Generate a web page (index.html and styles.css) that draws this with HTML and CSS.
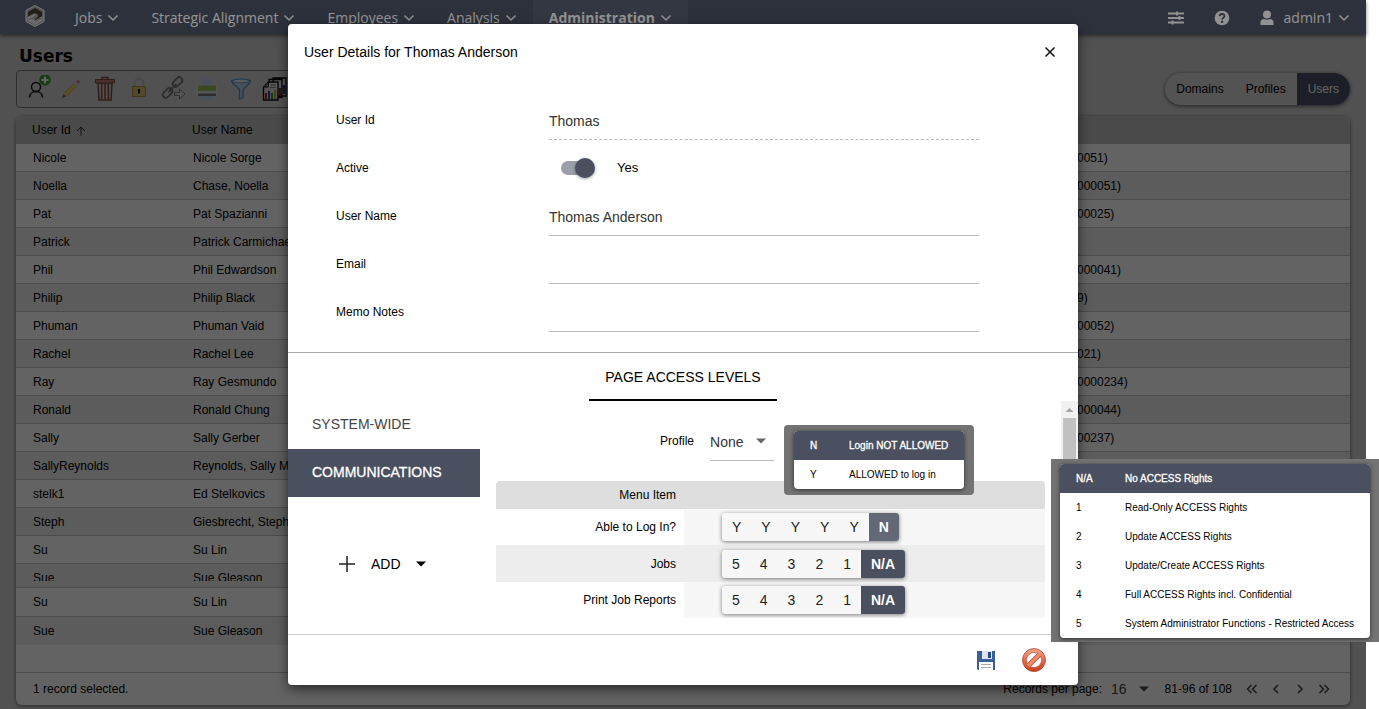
FILE: index.html
```html
<!DOCTYPE html>
<html lang="en">
<head>
<meta charset="utf-8">
<title>Users</title>
<link rel="stylesheet" href="styles.css">
</head>
<body>
<svg class="sprite" aria-hidden="true">
  <symbol id="chev" viewBox="0 0 12 12"><path d="M1.500 3.500 6 8l4.500-4.500" fill="none" stroke="currentColor" stroke-width="1.500"/></symbol>
  <symbol id="caret" viewBox="0 0 10 10"><path d="M0 2.500h10L5 7.500z" fill="currentColor"/></symbol>
</svg>
<div class="app">
  <header class="nav">
    <svg class="logo" viewBox="0 0 20 22">
      <path d="M10 0.500 19 5.500v11L10 21.500 1 16.500v-11z" fill="#8a8a8a" stroke="#d0d0d0"/>
      <path d="M3 7 10 3l7 4v6l-6 3.500-3-1 5-3.500V9.500L10 8l-7 3.500z" fill="#38342c"/>
      <path d="M2.500 12.500 8.500 9l3 1-4 2.500 3 2.500 7-4v4.500L10 20l-7.500-4.500z" fill="#b4b4b4"/>
      <path d="M4 14.500 7 13l3.500 3 5.500-3" fill="none" stroke="#808080" stroke-width="1"/>
    </svg>
    <nav class="menu">
      <button class="menu-item">Jobs <svg class="chev"><use href="#chev"/></svg></button>
      <button class="menu-item">Strategic Alignment <svg class="chev"><use href="#chev"/></svg></button>
      <button class="menu-item">Employees <svg class="chev"><use href="#chev"/></svg></button>
      <button class="menu-item">Analysis <svg class="chev"><use href="#chev"/></svg></button>
      <button class="menu-item current">Administration <svg class="chev"><use href="#chev"/></svg></button>
    </nav>
    <div class="nav-tools">
      <button class="nav-icon" aria-label="Settings"><svg width="16" height="14" viewBox="0 0 16 14"><path d="M0 2.500h16M0 7h16M0 11.500h16" stroke="currentColor" stroke-width="1.800"/><path d="M9 0.500v4M11.500 5v4M4.500 9.500v4" stroke="currentColor" stroke-width="2"/></svg></button>
      <button class="nav-icon" aria-label="Help"><svg width="16" height="16" viewBox="0 0 16 16"><circle cx="8" cy="8" r="7.300" fill="currentColor"/><path d="M5.700 6.300c0-3 4.800-3 4.800-.3 0 1.700-2.300 1.700-2.300 3.500" fill="none" stroke="#4b5264" stroke-width="1.800"/><circle cx="8.100" cy="11.800" r="1.200" fill="#4b5264"/></svg></button>
      <button class="account"><svg width="14" height="16" viewBox="0 0 14 16"><circle cx="7" cy="4.500" r="4" fill="currentColor"/><path d="M0.500 15v-2.500c0-2 1.500-3.500 3.500-3.500 2 .9 4 .9 6 0 2 0 3.500 1.500 3.500 3.500V15z" fill="currentColor"/></svg><span>admin1</span><svg class="chev"><use href="#chev"/></svg></button>
    </div>
  </header>

  <main class="content">
    <h1 class="title">Users</h1>
    <div class="bar">
      <div class="toolbar">
        <button class="tool" aria-label="Add user"><svg viewBox="0 0 28 28"><circle cx="13" cy="12" r="4.500" fill="none" stroke="#111" stroke-width="1.500"/><path d="M6.500 22.500c0-8 13-8 13 0" fill="none" stroke="#111" stroke-width="1.500"/><circle cx="22" cy="5" r="5.800" fill="#2f9a2f"/><path d="M22 1.500v7M18.500 5h7" stroke="#fff" stroke-width="2.200"/></svg></button>
        <button class="tool" aria-label="Edit"><svg viewBox="0 0 28 28"><path d="m5 23 1.500-4 2.500 2.500z" fill="#6b5a42"/><path d="M6.500 19 17 8.500l2.500 2.500L9 21.500z" fill="#e8c860" stroke="#b8963a" stroke-width=".6"/><path d="m17 8.500 2-2 2.500 2.500-2 2z" fill="#ccc"/><path d="m19 6.500 1.500-1.500q2.500 0 2.500 2.500L21.500 9z" fill="#d98078"/></svg></button>
        <button class="tool" aria-label="Delete"><svg viewBox="0 0 28 28"><path d="M7 8h14l-1 17H8z" fill="#dcc8c2" stroke="#7d4a40" stroke-width="1.500"/><path d="M4.500 4.500h19v3.500h-19z" fill="#b98076" stroke="#7d4a40"/><path d="M11 4V2.500h6V4" fill="none" stroke="#7d4a40" stroke-width="1.500"/><path d="M10.700 9v15M14 9v15M17.300 9v15" stroke="#7d4a40" stroke-width="1.500"/></svg></button>
        <button class="tool" aria-label="Lock"><svg viewBox="0 0 28 28"><path d="M9.500 12V8c0-6 9-6 9 0v4" fill="none" stroke="#b8b8b8" stroke-width="2"/><path d="M7.500 11.500h13v10h-13z" fill="#d9bc70" stroke="#a58a45"/><path d="M14 14v4.500" stroke="#111" stroke-width="2"/></svg></button>
        <button class="tool" aria-label="Assign link"><svg viewBox="0 0 28 28"><g fill="none" stroke="#777" stroke-width="2"><rect x="13" y="4" width="11" height="6" rx="3" transform="rotate(-45 18.500 7)"/><rect x="3" y="15" width="11" height="6" rx="3" transform="rotate(-45 8.500 18)"/><path d="m9.500 17 8-8"/></g><path d="M15.500 17.500h5V14l5.500 5-5.500 5v-3.500h-5z" fill="#d8d8d8" stroke="#777"/></svg></button>
        <button class="tool" aria-label="Print"><svg viewBox="0 0 28 28"><path d="M8.500 3.500h11V11h-11z" fill="#b9d2ea"/><path d="M5 10.500h18q1 0 1.500 4V21h-21v-6.500q.5-4 1.500-4z" fill="#dedede"/><path d="M5 10.500h18v5.500H5z" fill="#9cb95a"/><path d="M5 18.500h18V21H5z" fill="#777"/><path d="M8 21h12v3.500H8z" fill="#b3d3ef"/></svg></button>
        <button class="tool" aria-label="Filter"><svg viewBox="0 0 28 28"><path d="M4.500 6c3-2.500 16-2.500 19 0-1 4-7.500 7-7.500 9v8l-3.500 1v-9c0-2-7-5-8-9z" fill="#b4d0ea" stroke="#5a8cbb" stroke-width="1.300"/><ellipse cx="14" cy="6" rx="8" ry="1.800" fill="#e2eef9" stroke="#5a8cbb" stroke-width=".7"/></svg></button>
        <button class="tool" aria-label="Reports"><svg viewBox="0 0 28 28"><g fill="#ddd" stroke="#111" stroke-width="1.400"><path d="M12 3h13v18H12zM8 4.500h13v18H8z"/><path d="M7.500 7H17v18H2.500V12z"/></g><path d="M2.500 12h5V7" fill="#777" stroke="#111"/><path d="M9.500 10h5M9.500 12.500h5" stroke="#777"/><path d="M5 24v-6" stroke="#a22" stroke-width="2"/><path d="M8 24v-8" stroke="#234a99" stroke-width="2"/><path d="M11 24v-6" stroke="#2a8a3a" stroke-width="2"/><path d="M14 24v-9" stroke="#c69b22" stroke-width="2"/><path d="M19 21v-8" stroke="#822" stroke-width="2"/><path d="M23 19v-9" stroke="#223d88" stroke-width="2"/></svg></button>
      </div>
      <div class="segmented">
        <button>Domains</button><button>Profiles</button><button class="on">Users</button>
      </div>
    </div>
    <section class="card">
      <table class="users">
        <thead><tr><th class="c-id">User Id <svg class="sort" viewBox="0 0 10 10"><path d="M5 9.500V1M1 5l4-4 4 4" fill="none" stroke="currentColor"/></svg></th><th class="c-name">User Name</th><th></th></tr></thead>
        <tbody>
          <tr><td>Nicole</td><td>Nicole Sorge</td><td>0051)</td></tr>
          <tr><td>Noella</td><td>Chase, Noella</td><td>000051)</td></tr>
          <tr><td>Pat</td><td>Pat Spazianni</td><td>00025)</td></tr>
          <tr><td>Patrick</td><td>Patrick Carmichael</td><td></td></tr>
          <tr><td>Phil</td><td>Phil Edwardson</td><td>000041)</td></tr>
          <tr><td>Philip</td><td>Philip Black</td><td>9)</td></tr>
          <tr><td>Phuman</td><td>Phuman Vaid</td><td>00052)</td></tr>
          <tr><td>Rachel</td><td>Rachel Lee</td><td>021)</td></tr>
          <tr><td>Ray</td><td>Ray Gesmundo</td><td>0000234)</td></tr>
          <tr><td>Ronald</td><td>Ronald Chung</td><td>000044)</td></tr>
          <tr><td>Sally</td><td>Sally Gerber</td><td>00237)</td></tr>
          <tr><td>SallyReynolds</td><td>Reynolds, Sally M</td><td></td></tr>
          <tr><td>stelk1</td><td>Ed Stelkovics</td><td></td></tr>
          <tr><td>Steph</td><td>Giesbrecht, Steph</td><td></td></tr>
          <tr><td>Su</td><td>Su Lin</td><td></td></tr>
          <tr class="cut"><td><div>Sue</div></td><td><div>Sue Gleason</div></td><td></td></tr>
          <tr class="plain"><td>Su</td><td>Su Lin</td><td></td></tr>
          <tr class="shade"><td>Sue</td><td>Sue Gleason</td><td></td></tr>
        </tbody>
      </table>
      <footer class="pager">
        <span>1 record selected.</span>
        <div class="pager-right">
          <span>Records per page:</span>
          <button class="per-page">16 <svg class="caret"><use href="#caret"/></svg></button>
          <span class="range">81-96 of 108</span>
          <button class="step" aria-label="First"><svg viewBox="0 0 12 12"><path d="M5.500 2 1.500 6l4 4M10.500 2l-4 4 4 4"/></svg></button>
          <button class="step" aria-label="Previous"><svg viewBox="0 0 12 12"><path d="M8 2 4 6l4 4"/></svg></button>
          <button class="step" aria-label="Next"><svg viewBox="0 0 12 12"><path d="m4 2 4 4-4 4"/></svg></button>
          <button class="step" aria-label="Last"><svg viewBox="0 0 12 12"><path d="m1.500 2 4 4-4 4M6.500 2l4 4-4 4"/></svg></button>
        </div>
      </footer>
    </section>
  </main>

  <div class="backdrop">
    <section class="modal" role="dialog" aria-labelledby="dlg-title">
      <header class="modal-head">
        <h2 id="dlg-title">User Details for Thomas Anderson</h2>
        <button class="close" aria-label="Close"><svg viewBox="0 0 12 12"><path d="m1.500 1.500 9 9m0-9-9 9" stroke="#111" stroke-width="1.500"/></svg></button>
      </header>
      <form class="form">
        <div class="row"><label for="uid">User Id</label><input class="text locked" id="uid" value="Thomas" readonly></div>
        <div class="row"><label for="act">Active</label><div class="switch-wrap"><input class="switch" type="checkbox" id="act" checked><span>Yes</span></div></div>
        <div class="row"><label for="uname">User Name</label><input class="text" id="uname" value="Thomas Anderson"></div>
        <div class="row"><label for="mail">Email</label><input class="text" id="mail"></div>
        <div class="row"><label for="memo">Memo Notes</label><input class="text" id="memo"></div>
      </form>
      <div class="tabs"><button class="tab">PAGE ACCESS LEVELS</button></div>
      <div class="access">
        <div class="side">
          <button class="side-item">SYSTEM-WIDE</button>
          <button class="side-item on">COMMUNICATIONS</button>
          <button class="add"><svg class="plus" viewBox="0 0 18 18"><path d="M9 1v16M1 9h16" stroke="#222" stroke-width="1.500"/></svg><span>ADD</span><svg class="caret"><use href="#caret"/></svg></button>
        </div>
        <div class="pane">
          <div class="profile"><label for="prof">Profile</label><div class="select-wrap"><select id="prof"><option>None</option></select><svg class="caret"><use href="#caret"/></svg></div></div>
          <table class="levels">
            <thead><tr><th>Menu Item</th><th></th></tr></thead>
            <tbody>
              <tr><td>Able to Log In?</td><td><div class="group"><button>Y</button><button>Y</button><button>Y</button><button>Y</button><button>Y</button><button class="on soft">N</button></div></td></tr>
              <tr class="alt"><td>Jobs</td><td><div class="group"><button>5</button><button>4</button><button>3</button><button>2</button><button>1</button><button class="on">N/A</button></div></td></tr>
              <tr><td>Print Job Reports</td><td><div class="group"><button>5</button><button>4</button><button>3</button><button>2</button><button>1</button><button class="on">N/A</button></div></td></tr>
            </tbody>
          </table>
        </div>
        <div class="scrollbar"><svg viewBox="0 0 17 17"><path d="M4.500 11h8l-4-4z" fill="#a3a3a3"/></svg><div class="thumb"></div></div>
      </div>
      <footer class="modal-foot">
        <button class="act" aria-label="Save"><svg viewBox="0 0 24 24"><path d="M3 3h18v19H4l-1-1z" fill="#3a5f9b"/><path d="M8 3h10v8H8z" fill="#dfe5ee"/><path d="M14 4h3v6h-3z" fill="#274a85"/><path d="M5 14h14v8H5z" fill="#fff"/><path d="M7 16.500h10M7 19.500h10" stroke="#aaa"/></svg></button>
        <button class="act" aria-label="Cancel"><svg viewBox="0 0 24 24"><defs><linearGradient id="red" x2="0" y2="1"><stop stop-color="#f3a48c"/><stop offset="1" stop-color="#cf3a14"/></linearGradient></defs><circle cx="12" cy="12" r="11.500" fill="url(#red)" stroke="#a94a35" stroke-width=".8"/><circle cx="12" cy="12" r="7.500" fill="#fff" stroke="#b54a30" stroke-width=".6"/><path d="m6.700 17.300 10.600-10.600" stroke="#b84a30" stroke-width="5"/><path d="m6 18 12-12" stroke="#ea8a6c" stroke-width="3.600"/></svg></button>
      </footer>
      <div class="legend login">
        <table><tbody><tr class="hd"><th>N</th><th>Login NOT ALLOWED</th></tr><tr><td>Y</td><td>ALLOWED to log in</td></tr></tbody></table>
      </div>
    </section>
  </div>
</div>
<div class="legend rights">
  <table><tbody>
    <tr class="hd"><th>N/A</th><th>No ACCESS Rights</th></tr>
    <tr><td>1</td><td>Read-Only ACCESS Rights</td></tr>
    <tr><td>2</td><td>Update ACCESS Rights</td></tr>
    <tr><td>3</td><td>Update/Create ACCESS Rights</td></tr>
    <tr><td>4</td><td>Full ACCESS Rights incl. Confidential</td></tr>
    <tr><td>5</td><td>System Administrator Functions - Restricted Access</td></tr>
  </tbody></table>
</div>
</body>
</html>
```
FILE: styles.css
```css
* { box-sizing: border-box; }
html, body { height: 100%; }
body {
  margin: 0;
  background: #fff;
  font: 12px/16px "Liberation Sans", Arial, sans-serif;
  color: #000;
  overflow: hidden;
}
button {
  border: 0;
  padding: 0;
  background: none;
  font: inherit;
  color: inherit;
}
h1, h2 { margin: 0; }
svg { display: block; flex: none; }
.sprite { position: absolute; width: 0; height: 0; }
.chev { width: 12px; height: 12px; }
.caret { width: 10px; height: 10px; }

.app {
  position: relative;
  margin-right: 13px;
  min-height: 100%;
  display: flex;
  flex-direction: column;
}

/* Top navigation */
.nav {
  position: relative;
  z-index: 1;
  display: flex;
  height: 34px;
  padding: 0 16px 0 25px;
  background: #4b5264;
  color: #f4f4f4;
  font-family: "Open Sans", "Noto Sans", sans-serif;
  font-size: 14px;
  box-shadow: 0 2px 4px rgba(0, 0, 0, .5);
}
.logo { width: 20px; height: 22px; margin-top: 5px; }
.menu { display: flex; margin-left: 14px; }
.menu-item { display: flex; align-items: center; gap: 5px; padding: 2px 16px 0; }
.current { background: #555c6d; font-weight: 700; }
.nav-tools { display: flex; align-items: center; gap: 30px; margin-left: auto; padding-top: 2px; }
.account { display: flex; align-items: center; gap: 10px; }
.account .chev { margin-left: -5px; }

/* Page content */
.content {
  position: relative;
  flex: 1;
  padding: 12px 16px 4px;
  background: #d2d2d2;
}
.content::after {
  content: "";
  position: absolute;
  inset: 0;
  background: rgba(0, 0, 0, .35);
}
.title {
  padding-left: 3px;
  font: 700 17px/20px "DejaVu Sans", sans-serif;
}
.bar { display: flex; justify-content: space-between; align-items: center; margin-top: 4px; }
.toolbar {
  display: flex;
  gap: 6px;
  width: 320px;
  height: 38px;
  padding: 4px 6px;
  border: 1px solid #777;
  border-radius: 4px;
}
.tool { width: 28px; height: 28px; }
.segmented {
  display: flex;
  height: 32px;
  border-radius: 16px;
  overflow: hidden;
  background: #d6d6d6;
  box-shadow: 0 1px 4px rgba(0, 0, 0, .6);
}
.segmented button { padding: 0 11px; }
.segmented .on { background: #4b5264; color: #fff; }

.card {
  margin-top: 8px;
  border-radius: 6px;
  overflow: hidden;
  background: #fff;
  box-shadow: 0 1px 4px rgba(0, 0, 0, .5);
}
.users { width: 100%; border-collapse: separate; border-spacing: 0; table-layout: fixed; }
.users th { height: 28px; padding: 0 0 0 16px; background: #bfbfbf; text-align: left; font-weight: 400; }
.users td { height: 28px; padding: 0 0 0 17px; border-bottom: 1px solid #c4c4c4; white-space: nowrap; }
.c-id { width: 160px; }
.c-name { width: 884px; }
.users tr:nth-child(even) td { background: #ebebeb; }
.sort { display: inline-block; width: 10px; height: 10px; vertical-align: -2px; margin-left: 2px; color: #333; }
.users .cut td { height: 24px; }
.cut div { height: 10px; overflow: hidden; line-height: 14px; }
.users .plain td { background: #fff; height: 29px; }
.users .shade td { background: #ebebeb; border-bottom: 0; }
.pager {
  display: flex;
  justify-content: space-between;
  align-items: center;
  height: 33px;
  margin-top: 27px;
  padding: 0 14px 0 17px;
  border-top: 1px solid #c4c4c4;
}
.pager-right { display: flex; align-items: center; }
.per-page { display: flex; align-items: center; gap: 12px; margin: 0 16px 0 9px; font-size: 14px; color: #444; }
.range { margin-right: 8px; }
.step { padding: 6px; }
.step svg { width: 12px; height: 12px; fill: none; stroke: #444; stroke-width: 1.500; }

/* Dialog */
.backdrop {
  position: absolute;
  inset: 0;
  z-index: 2;
  display: flex;
  align-items: center;
  justify-content: center;
  background: rgba(0, 0, 0, .4);
}
.modal {
  position: relative;
  width: 790px;
  max-width: 100%;
  border-radius: 4px;
  background: #fff;
  box-shadow: 0 4px 12px rgba(0, 0, 0, .6);
}
.modal-head { display: flex; justify-content: space-between; align-items: center; height: 56px; padding: 0 22px 0 16px; }
.modal-head h2 { font-size: 14px; font-weight: 400; }
.close svg { width: 12px; height: 12px; }
.form { padding: 16px 99px 16px 48px; border-bottom: 1px solid #aaa; }
.row { display: grid; grid-template-columns: 213px 1fr; align-items: center; height: 48px; }
.text {
  width: 100%;
  height: 40px;
  padding: 2px 0 0;
  border: 0;
  border-bottom: 1px solid #bbb;
  background: none;
  font: 14px "Liberation Sans", Arial, sans-serif;
  color: #333;
  outline: 0;
}
.locked { border-bottom-style: dashed; }
.switch-wrap { display: flex; align-items: center; gap: 22px; padding-left: 12px; font-size: 13px; }
.switch {
  appearance: none;
  position: relative;
  width: 34px;
  height: 20px;
  margin: 0;
}
.switch::before {
  content: "";
  position: absolute;
  left: 0;
  top: 3px;
  width: 32px;
  height: 14px;
  border-radius: 7px;
  background: #9b9fa9;
}
.switch::after {
  content: "";
  position: absolute;
  right: 0;
  top: 0;
  width: 20px;
  height: 20px;
  border-radius: 50%;
  background: #4a5060;
  box-shadow: 0 1px 3px rgba(0, 0, 0, .4);
}
.tabs { display: flex; justify-content: center; }
.tab { height: 48px; padding: 2px 16px 0; border-bottom: 2px solid #000; font-size: 14px; }

.access { display: flex; height: 233px; }
.side { flex: 0 0 192px; display: flex; flex-direction: column; font-size: 14px; }
.side-item { height: 48px; padding: 0 24px 2px; text-align: left; color: #444; }
.side-item.on { background: #4a5060; color: #fff; -webkit-text-stroke: 0.3px #fff; }
.add { display: flex; align-items: center; gap: 15px; margin: 43px 0 0 50px; height: 48px; }
.plus { width: 18px; height: 18px; }
.pane { flex: 1; padding: 0 16px; }
.profile { display: flex; align-items: center; gap: 16px; height: 80px; padding-left: 164px; }
.select-wrap { position: relative; width: 64px; }
.select-wrap select {
  appearance: none;
  width: 100%;
  height: 40px;
  padding: 2px 0 0;
  border: 0;
  border-bottom: 1px solid #bbb;
  background: none;
  font: 14px "Liberation Sans", Arial, sans-serif;
  color: #333;
}
.select-wrap .caret { position: absolute; right: 8px; top: 15px; color: #666; pointer-events: none; }
.levels { width: 100%; border-collapse: separate; border-spacing: 0; table-layout: fixed; border-radius: 4px; overflow: hidden; }
.levels th { height: 28px; padding: 0 8px 0 0; background: #dedede; font-weight: 400; text-align: right; }
.levels th:first-child { width: 188px; }
.levels td { height: 36px; padding: 0 8px 0 0; text-align: right; }
.levels td:last-child { padding: 0 0 0 38px; background: #f7f7f7; text-align: left; }
.levels .alt td { height: 37px; background: #ededed; }
.group { display: inline-flex; vertical-align: middle; height: 28px; border-radius: 3px; overflow: hidden; background: #f7f7f7; box-shadow: 0 1px 4px rgba(0, 0, 0, .5); font-size: 14px; color: #222; }
.group button { padding: 0 10px; }
.group .on { background: #4a5060; color: #fff; font-weight: 700; }
.group .soft { background: #626876; }
.scrollbar { flex: 0 0 17px; display: flex; flex-direction: column; background: #f1f1f1; }
.thumb { height: 100px; margin: 0 2px; background: #c1c1c1; }
.modal-foot { display: flex; justify-content: flex-end; align-items: center; gap: 24px; height: 51px; padding-right: 32px; border-top: 1px solid #ccc; }
.act svg { width: 24px; height: 24px; }

/* Legends that float above the page */
.legend { position: absolute; background: #737373; font-size: 10px; }
.legend table {
  width: 100%;
  border-collapse: separate;
  border-spacing: 0;
  border-radius: 4px;
  overflow: hidden;
  background: #fff;
  box-shadow: 0 1px 4px rgba(0, 0, 0, .6);
}
.legend th, .legend td { height: 29px; padding: 0; text-align: left; font-weight: 400; white-space: nowrap; }
.legend .hd { background: #4a5060; color: #fff; -webkit-text-stroke: 0.3px #fff; }
.legend th:first-child, .legend td:first-child { padding-left: 16px; }
.login { right: 104px; top: 401px; width: 190px; padding: 6px 10px; border-radius: 4px; }
.login th:first-child { width: 55px; }
.rights { z-index: 3; right: 0; top: 459px; width: 328px; padding: 5px 9px 4px; }
.rights th:first-child { width: 65px; }
```
